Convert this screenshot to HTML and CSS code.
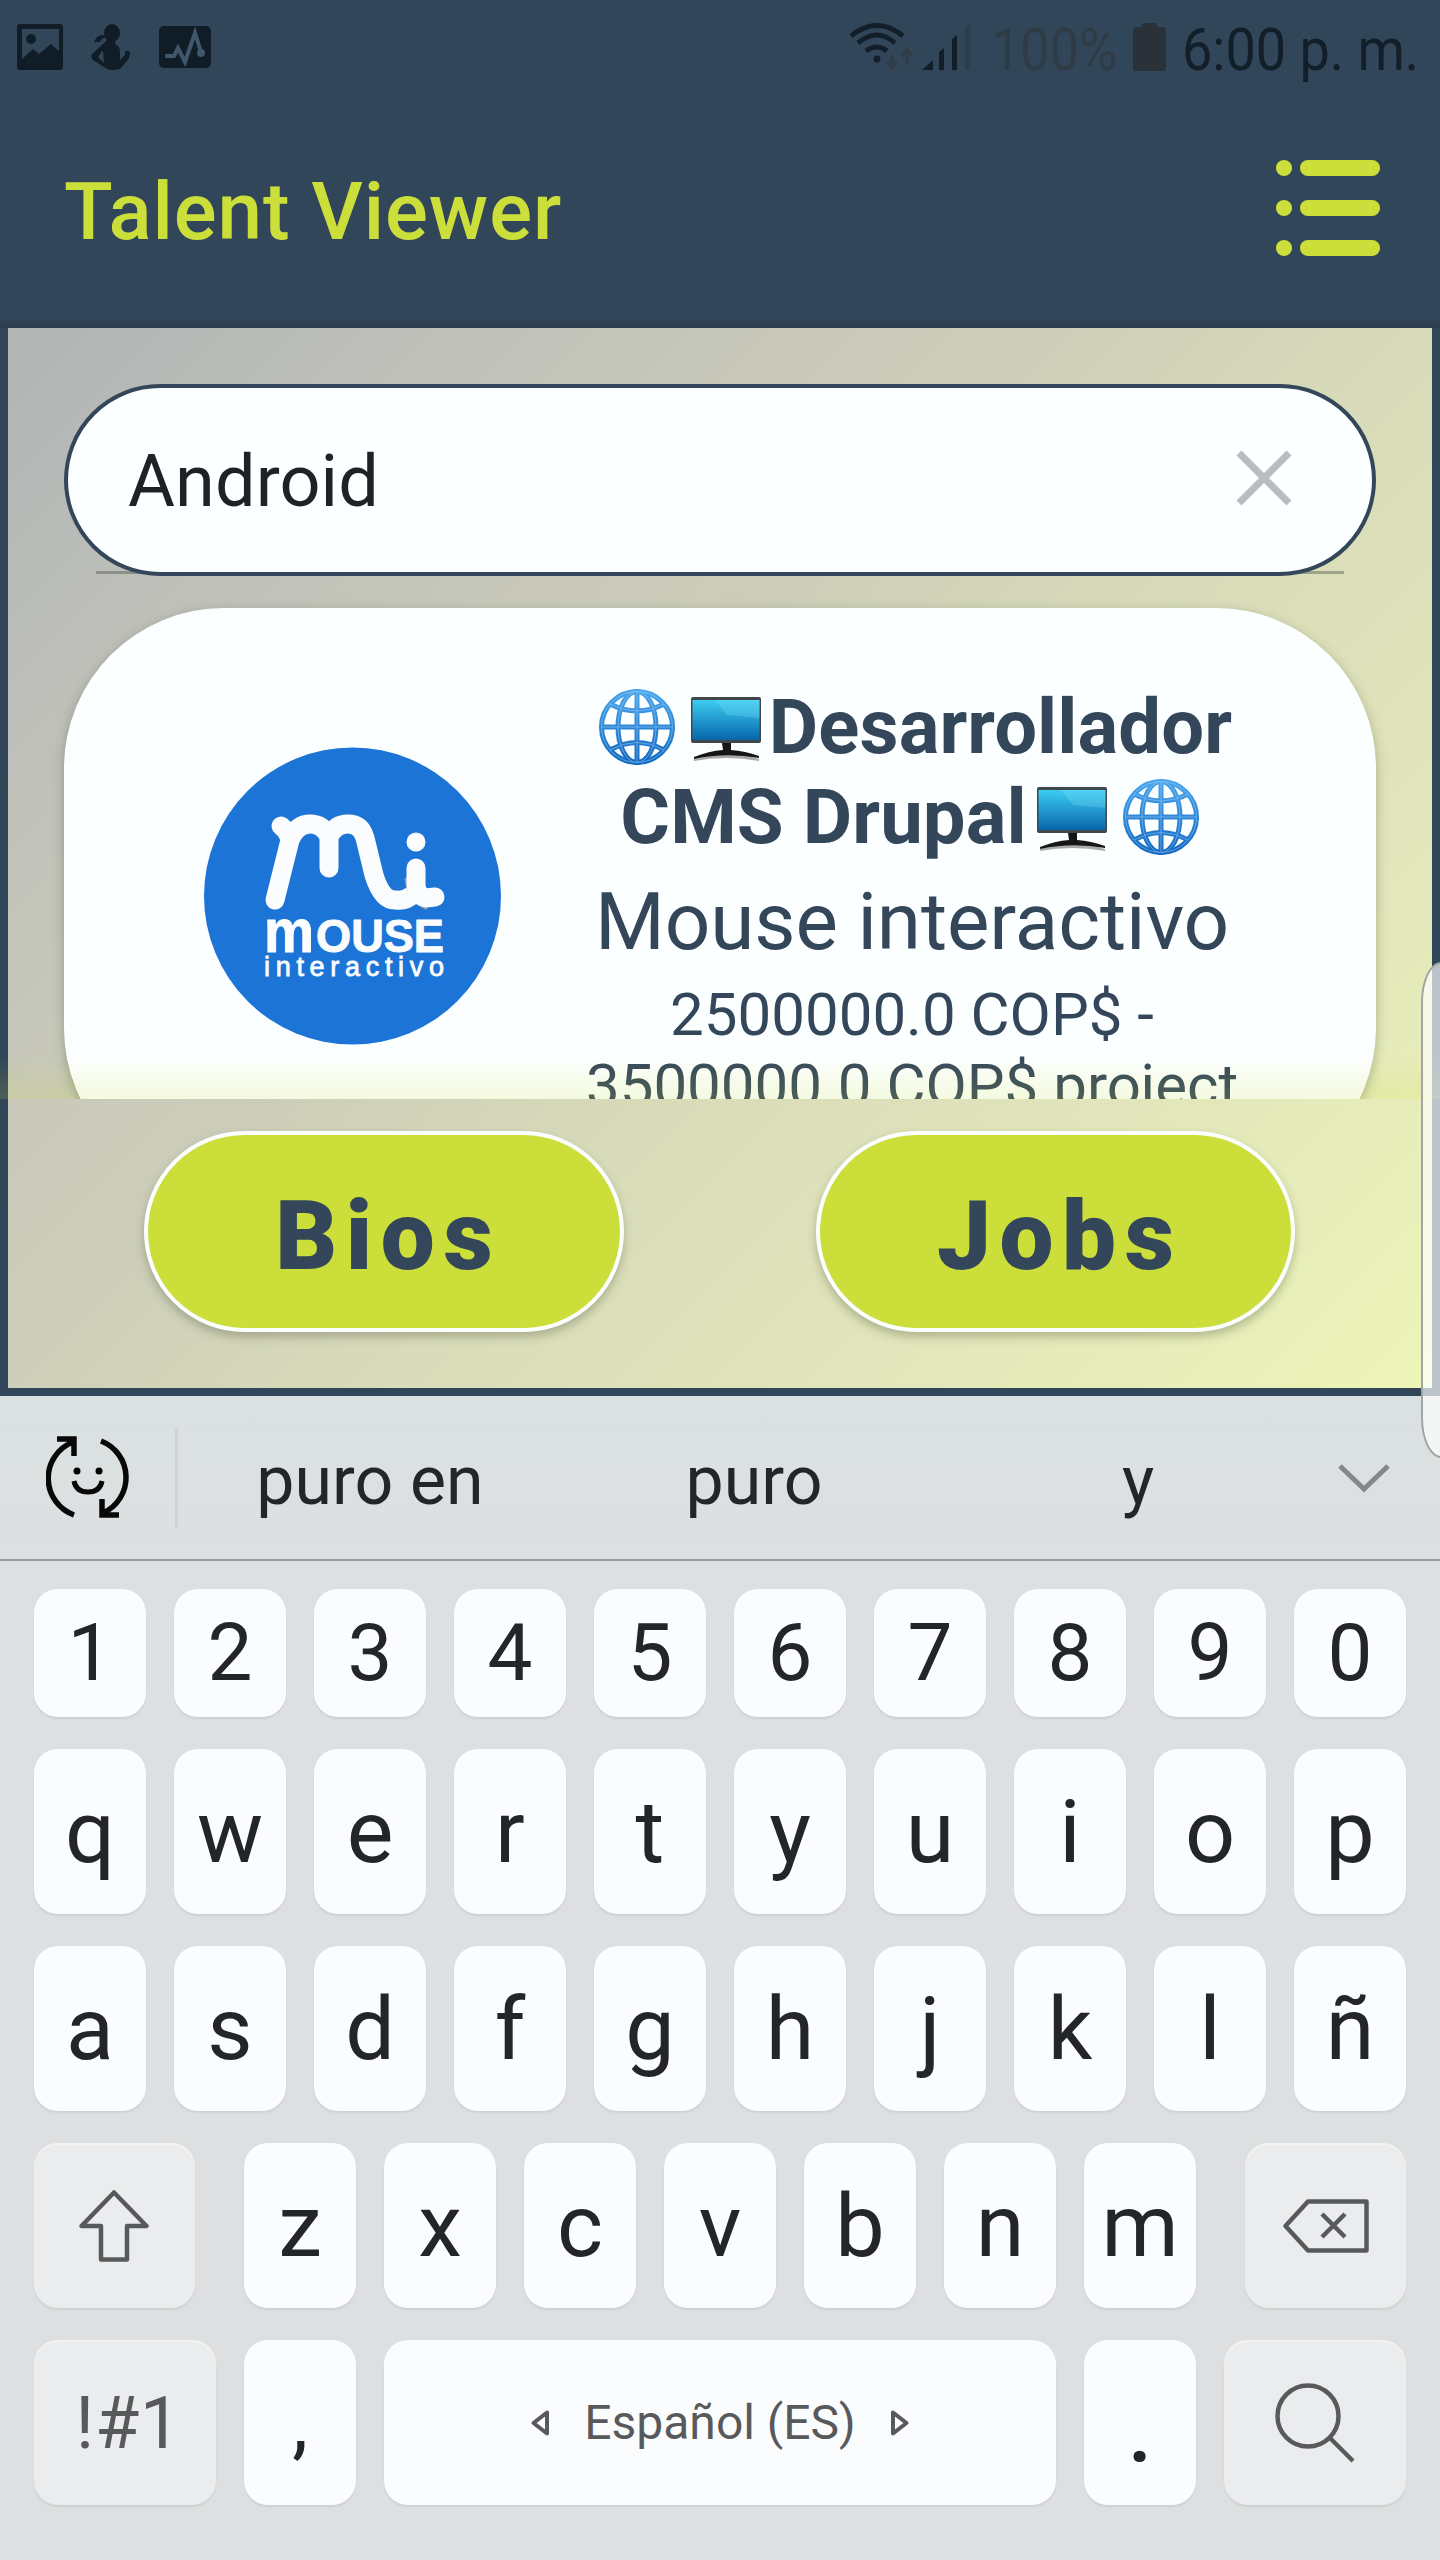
FILE: index.html
```html
<!DOCTYPE html>
<html lang="es">
<head>
<meta charset="utf-8">
<title>Talent Viewer</title>
<link rel="stylesheet" href="styles.css">
</head>
<body>
<svg class="defs" width="0" height="0" aria-hidden="true">
  <defs>
    <linearGradient id="globeFill" x1="0" y1="0" x2="0" y2="76" gradientUnits="userSpaceOnUse"><stop offset="0" stop-color="#4ba6ee"/><stop offset="1" stop-color="#1268c0"/></linearGradient>
    <linearGradient id="screenFill" x1="0" y1="0" x2="0" y2="1"><stop offset="0" stop-color="#3ccdf1"/><stop offset="1" stop-color="#0866ac"/></linearGradient>
    <symbol id="globe" viewBox="0 0 76 76">
      <g fill="none" stroke="url(#globeFill)" stroke-width="5">
        <circle cx="38" cy="38" r="35.5"/>
        <ellipse cx="38" cy="38" rx="19" ry="35.5"/>
        <path d="M38 2L38.010 74M2 38.010H74V38M11 15Q38 29 65 15M11 61Q38 46 65 61"/>
      </g>
      <g fill="none" stroke="#a6d5f8" stroke-width="1" opacity=".5">
        <circle cx="38" cy="38" r="35.5"/>
        <ellipse cx="38" cy="38" rx="19" ry="35.5"/>
        <path d="M38 2V74M2 38H74M11 15Q38 29 65 15M11 61Q38 46 65 61"/>
      </g>
    </symbol>
    <symbol id="monitor" viewBox="0 0 70 64">
      <path d="M3 62Q35 52 68 62V64Q35 58 3 64Z" fill="#aaa"/>
      <rect x="0" y="0" width="70" height="46" rx="2" fill="#3f474b"/>
      <rect x="1.5" y="3" width="67" height="40" fill="url(#screenFill)"/>
      <path d="M24 3H68.500V21L36 18Z" fill="#8ae6fa" opacity=".25"/>
      <path d="M31 46H40V53Q54 54 68 59V61Q35 55 3 62V60Q18 54 32 53Z" fill="#161616"/>
    </symbol>
  </defs>
</svg>

<div class="phone">
  <header class="top">
    <div class="status">
      <div class="notices">
        <svg class="ic-photo" viewBox="0 0 46 46"><path fill="#111d26" fill-rule="evenodd" d="M3 0H43Q46 0 46 3V43Q46 46 43 46H3Q0 46 0 43V3Q0 0 3 0ZM5 5V35L16 25L22 30L34 20L42 27V5Z"/><circle cx="14" cy="15" r="5" fill="#111d26"/></svg>
        <svg class="ic-person" viewBox="0 0 40 46"><g fill="#111d26"><ellipse cx="21" cy="9" rx="8" ry="9"/><path d="M16 16H25L24 20Q29 22 29 28V36L34 31V28Q36 25 39 28Q39 35 35 38L29 45Q22 47 16 45L2 36Q-1 33 1 30L13 19ZM12 26L7 33L13 39Z"/><path d="M3 18Q6 11 12 11L15 13Q11 14 9 18Z"/></g></svg>
        <svg class="ic-pulse" viewBox="0 0 52 42"><rect width="52" height="42" rx="5" fill="#111d26"/><path d="M6 30H15L19 22L26 36L36 7L42 26" fill="none" stroke="#40566a" stroke-width="4"/><circle cx="42" cy="27" r="4" fill="#40566a"/></svg>
      </div>
      <div class="system">
        <svg class="ic-wifi" viewBox="0 0 66 48"><g fill="none" stroke="#121f29" stroke-width="5"><path d="M2 13Q28-8 54 13"/><path d="M9 20Q28 4 46 20"/><path d="M17 28Q28 20 38 28"/></g><circle cx="28" cy="36" r="3.500" fill="#121f29"/><path d="M43 32V44M38 39L43 45L48 39M58 41V28M53 33L58 27L63 33" fill="none" stroke="#2f3d49" stroke-width="3.500"/></svg>
        <svg class="ic-signal" viewBox="0 0 50 46"><path fill="#121f29" d="M1 46L12 36V46ZM18 28L23 24V46H18ZM31 15L36 11V46H31Z"/><path fill="#2d3d4b" d="M44 3L49 0V46H44Z"/></svg>
        <span class="charge"><b>100%</b></span>
        <svg class="ic-battery" viewBox="0 0 33 48"><path fill="#2a3138" d="M9 2Q9 0 11 0H22Q24 0 24 2V4H30Q33 4 33 7V45Q33 48 30 48H3Q0 48 0 45V7Q0 4 3 4H9Z"/></svg>
        <span class="clock"><b>6:00 p. m.</b></span>
      </div>
    </div>
    <div class="appbar">
      <h1>Talent Viewer</h1>
      <svg class="ic-menu" viewBox="0 0 104 96"><g fill="#cbde3a"><circle cx="8" cy="8" r="8"/><circle cx="8" cy="48" r="8"/><circle cx="8" cy="88" r="8"/><rect x="24" width="80" height="16" rx="8"/><rect x="24" y="40" width="80" height="16" rx="8"/><rect x="24" y="80" width="80" height="16" rx="8"/></g></svg>
    </div>
  </header>

  <main class="panel">
    <div class="results">
      <div class="search">
        <span>Android</span>
        <svg class="ic-clear" viewBox="0 0 56 56"><path d="M3 3L53 53M53 3L3 53" stroke="#b9bcc0" stroke-width="7"/></svg>
      </div>
      <article class="card">
        <svg class="logo" viewBox="0 0 298 298">
          <circle cx="148.500" cy="149" r="148.500" fill="#1b74d6"/>
          <g fill="none" stroke="#fbfcfe" stroke-width="19" stroke-linecap="round" stroke-linejoin="round">
            <path d="M77 79Q84 84 86 93M71 153L86 93Q93 77 106 77Q119 77 125 90V121M125 90Q131 77 144 77Q157 77 161 91L170 128Q178 154 192 153Q202 154 208 148"/>
            <path d="M202 132Q205 154 222 161" stroke="#9199a8" stroke-width="3"/>
            <path d="M212 121V138Q213 149 222 151L231 150"/>
          </g>
          <circle cx="212" cy="95" r="9.500" fill="#fbfcfe"/>
          <text class="logo-m" x="60" y="205" textLength="50" lengthAdjust="spacingAndGlyphs">m</text>
          <text class="logo-ouse" x="112" y="205" textLength="128" lengthAdjust="spacingAndGlyphs">OUSE</text>
          <text class="logo-sub" x="60" y="229" textLength="180">interactivo</text>
        </svg>
        <div class="job">
          <h2><span><svg class="globe lead"><use href="#globe"/></svg><svg class="monitor"><use href="#monitor"/></svg>Desarrollador</span><span>CMS Drupal<svg class="monitor"><use href="#monitor"/></svg><svg class="globe trail"><use href="#globe"/></svg></span></h2>
          <p class="company">Mouse interactivo</p>
          <p class="pay">2500000.0 COP$ -<br>3500000.0 COP$ project</p>
        </div>
      </article>
      <div class="fade"></div>
    </div>
    <nav class="tabs">
      <button>Bios</button>
      <button>Jobs</button>
    </nav>
  </main>

  <section class="keyboard">
    <div class="suggest">
      <svg class="ic-emoji" viewBox="0 0 84 84"><g fill="none" stroke="#080808" stroke-width="5.500"><path d="M28 79A39 39 0 0 1 27 6M11 3H28V20"/><path d="M55 5A39 39 0 0 1 57 77M73 79H56V63"/><path d="M28 45Q30 56 42 56Q54 56 56 45" stroke-width="5"/></g><circle cx="31" cy="35" r="3.500"/><circle cx="53" cy="35" r="3.500"/></svg>
      <i class="rule"></i>
      <span>puro en</span><span>puro</span><span>y</span>
      <svg class="ic-down" viewBox="0 0 52 30"><path d="M2 3L26 26L50 3" fill="none" stroke="#858789" stroke-width="5"/></svg>
    </div>
    <div class="rows">
      <div class="row digits"><kbd>1</kbd><kbd>2</kbd><kbd>3</kbd><kbd>4</kbd><kbd>5</kbd><kbd>6</kbd><kbd>7</kbd><kbd>8</kbd><kbd>9</kbd><kbd>0</kbd></div>
      <div class="row"><kbd>q</kbd><kbd>w</kbd><kbd>e</kbd><kbd>r</kbd><kbd>t</kbd><kbd>y</kbd><kbd>u</kbd><kbd>i</kbd><kbd>o</kbd><kbd>p</kbd></div>
      <div class="row"><kbd>a</kbd><kbd>s</kbd><kbd>d</kbd><kbd>f</kbd><kbd>g</kbd><kbd>h</kbd><kbd>j</kbd><kbd>k</kbd><kbd>l</kbd><kbd>ñ</kbd></div>
      <div class="row">
        <kbd class="fn shift"><svg viewBox="0 0 70 72"><path d="M35 2.500L67.500 36H48V69.500H22V36H2.500Z" fill="none" stroke="#58595b" stroke-width="4.500" stroke-linejoin="round"/></svg></kbd>
        <kbd>z</kbd><kbd>x</kbd><kbd>c</kbd><kbd>v</kbd><kbd>b</kbd><kbd>n</kbd><kbd>m</kbd>
        <kbd class="fn erase"><svg viewBox="0 0 86 54"><path d="M25 2.500H83.500V51.500H25L2.500 27ZM39 15L62 38M62 15L39 38" fill="none" stroke="#58595b" stroke-width="4.500" stroke-linejoin="round"/></svg></kbd>
      </div>
      <div class="row">
        <kbd class="fn sym">!#1</kbd>
        <kbd class="comma">,</kbd>
        <kbd class="space"><svg viewBox="0 0 18 26"><path d="M16 2.500V23.500L2.500 13Z" fill="none" stroke="#58595b" stroke-width="4" stroke-linejoin="round"/></svg><span>Español (ES)</span><svg viewBox="0 0 18 26"><path d="M2 2.500V23.500L15.500 13Z" fill="none" stroke="#58595b" stroke-width="4" stroke-linejoin="round"/></svg></kbd>
        <kbd class="dot">.</kbd>
        <kbd class="fn find"><svg viewBox="0 0 82 82"><circle cx="34" cy="34" r="30.500" fill="none" stroke="#58595b" stroke-width="4.500"/><path d="M55 55L79 79" stroke="#58595b" stroke-width="4.500"/></svg></kbd>
      </div>
    </div>
  </section>
  <div class="edge"></div>
</div>
</body>
</html>
```
FILE: styles.css
```css
* { box-sizing: border-box; }
body { margin: 0; font-family: Roboto, "Liberation Sans", sans-serif; background: #dddfe1; }
h1, h2, p { margin: 0; }
svg { display: block; flex: none; }
.defs { position: absolute; }
.phone { position: relative; width: 1440px; height: 2560px; overflow: hidden; display: flex; flex-direction: column; }

.top { height: 328px; background: linear-gradient(#32465a 318px, #2b3d4c 328px); }
.status { height: 99px; display: flex; justify-content: space-between; padding: 0 23px 0 17px; }
.notices { display: flex; align-items: center; gap: 28px; height: 94px; }
.ic-photo { width: 46px; height: 46px; }
.ic-person { width: 40px; height: 46px; }
.ic-pulse { width: 52px; height: 42px; }
.system { display: flex; align-items: center; height: 99px; }
.system svg { margin-bottom: 5px; }
.ic-wifi { width: 66px; height: 48px; }
.ic-signal { width: 50px; height: 46px; margin-left: 6px; }
.system b { display: block; font-weight: 400; font-size: 60px; line-height: 70px; white-space: nowrap; transform-origin: 0 50%; }
.charge { width: 122px; margin-left: 20px; color: #2f3b45; }
.charge b { transform: scaleX(.87); }
.ic-battery { width: 33px; height: 48px; margin-left: 20px; }
.clock { width: 235px; margin-left: 16px; color: #121f29; }
.clock b { transform: scaleX(.9); }
.appbar { display: flex; align-items: center; justify-content: space-between; height: 226px; padding: 0 60px 0 64px; }
.appbar h1 { font-size: 80px; font-weight: 500; line-height: 94px; color: #cbde3a; letter-spacing: .9px; }
.ic-menu { width: 104px; height: 96px; margin-top: -8px; }

.panel { height: 1068px; border: solid #32465a; border-width: 0 8px 8px; background: linear-gradient(135deg, #b2b4b5 0%, #bbbdb9 13%, #c7c8ba 30%, #cdceb9 42%, #d8dbb9 57%, #e2e6bb 77%, #edf5b8 100%); }
.results { position: relative; z-index: 0; height: 771px; margin: 0 -8px; padding: 56px 64px 0; overflow: hidden; }
.search { position: relative; height: 192px; border: 4px solid #34475a; border-radius: 96px; background: #fcffff; display: flex; align-items: center; justify-content: space-between; padding: 0 80px 0 60px; font-size: 72px; color: #1f2225; }
.search::before { content: ""; position: absolute; z-index: -1; left: 28px; right: 28px; bottom: -2px; height: 3px; background: rgba(70, 75, 65, .4); }
.search span { line-height: 84px; margin-top: 3px; letter-spacing: .1px; }
.ic-clear { width: 56px; height: 56px; margin-top: -4px; }
.card { margin-top: 32px; height: 580px; border-radius: 160px; background: #fcffff; box-shadow: 0 4px 12px rgba(60, 65, 40, .35); display: flex; padding: 74px 124px 0 140px; justify-content: space-between; }
.logo { width: 298px; height: 298px; margin-top: 65px; }
.logo text { fill: #fbfcfe; font-family: "Liberation Sans", Arial, sans-serif; }
.logo-m, .logo-ouse { font-weight: 700; stroke: #fbfcfe; stroke-width: 1px; stroke-linejoin: round; }
.logo-m { font-size: 61px; }
.logo-ouse { font-size: 47px; }
.logo-sub { font-size: 27px; stroke: #fbfcfe; stroke-width: .8px; }
.job { width: 680px; text-align: center; color: #34475a; white-space: nowrap; }
.job h2 { font-size: 76px; font-weight: 700; line-height: 90px; }
.job h2 span { display: flex; justify-content: center; align-items: center; height: 90px; letter-spacing: .1px; }
.job h2 span:first-child { padding-left: 7px; }
.globe { width: 76px; height: 76px; }
.globe.lead { margin-right: 16px; }
.globe.trail { margin-left: 16px; }
.monitor { width: 70px; height: 64px; margin: 4px 8px 0 0; }
.job span + span .monitor { margin: 4px 0 0 10px; }
.job h2 span + span { padding-right: 5px; }
.company { font-size: 80px; line-height: 94px; margin-top: 13px; letter-spacing: -.1px; }
.pay { font-size: 60px; line-height: 71px; margin-top: 10px; }
.fade { position: absolute; left: 0; right: 0; bottom: 0; height: 44px; background: linear-gradient(rgba(203, 222, 58, 0), rgba(203, 222, 58, .16)); }
.tabs { display: flex; gap: 192px; padding: 32px 137px 0 136px; }
.tabs button { flex: 1; height: 201px; padding: 8px 0 0 9px; border: 4px solid #fcffff; border-radius: 101px; background: #cbde3a; box-shadow: 0 5px 10px rgba(60, 65, 40, .3); font: 900 96px/112px Roboto, sans-serif; letter-spacing: 8.600px; color: #34475a; }

.keyboard { height: 1164px; background: #dddfe1; }
.suggest { height: 165px; border-bottom: 2px solid #97999b; background: linear-gradient(#dae1e1, #dddfe1); display: grid; grid-template-columns: 132px 46px 384px 384px 384px 110px; align-items: center; font-size: 68px; color: #232528; }
.suggest span { text-align: center; line-height: 80px; margin-top: 6px; }
.ic-emoji { width: 84px; height: 84px; margin-left: 46px; }
.rule { justify-self: end; width: 3px; height: 100px; background: #d0d3d5; }
.ic-down { width: 52px; height: 30px; margin-left: 8px; }
.rows { display: flex; flex-direction: column; gap: 32px; padding: 27.500px 34px 0; }
.row { display: flex; justify-content: space-between; height: 165px; }
.row.digits { height: 128.500px; }
kbd { width: 112px; border-radius: 24px; background: #fbfcfe; box-shadow: 0 2px 2px rgba(0, 0, 0, .07); font-family: inherit; font-size: 88px; line-height: 104px; color: #232528; display: flex; align-items: center; justify-content: center; }
.digits kbd { font-size: 80px; }
.fn { background: #ebeced; color: #58595b; box-shadow: 0 2px 2px rgba(0, 0, 0, .07), inset 0 2px 1px #f2f3f4; }
.shift { width: 161px; margin-right: 21px; }
.shift svg { width: 70px; height: 72px; margin-right: 2px; }
.erase { width: 161px; margin-left: 21px; }
.erase svg { width: 86px; height: 54px; }
.sym { width: 182px; font-size: 72px; padding: 2px 0 0 7px; letter-spacing: .8px; }
.comma { font-size: 80px; }
.space { width: 672px; gap: 35px; font-size: 48px; color: #58595b; }
.space svg { width: 18px; height: 26px; }
.dot { padding-top: 16px; font-weight: 500; }
.find { width: 182px; }
.find svg { width: 82px; height: 82px; }
.edge { position: absolute; left: 1421px; top: 962px; width: 40px; height: 496px; border: 2px solid #a2a5a4; border-radius: 20px / 40px; background: rgba(255, 255, 255, .68); }
```
